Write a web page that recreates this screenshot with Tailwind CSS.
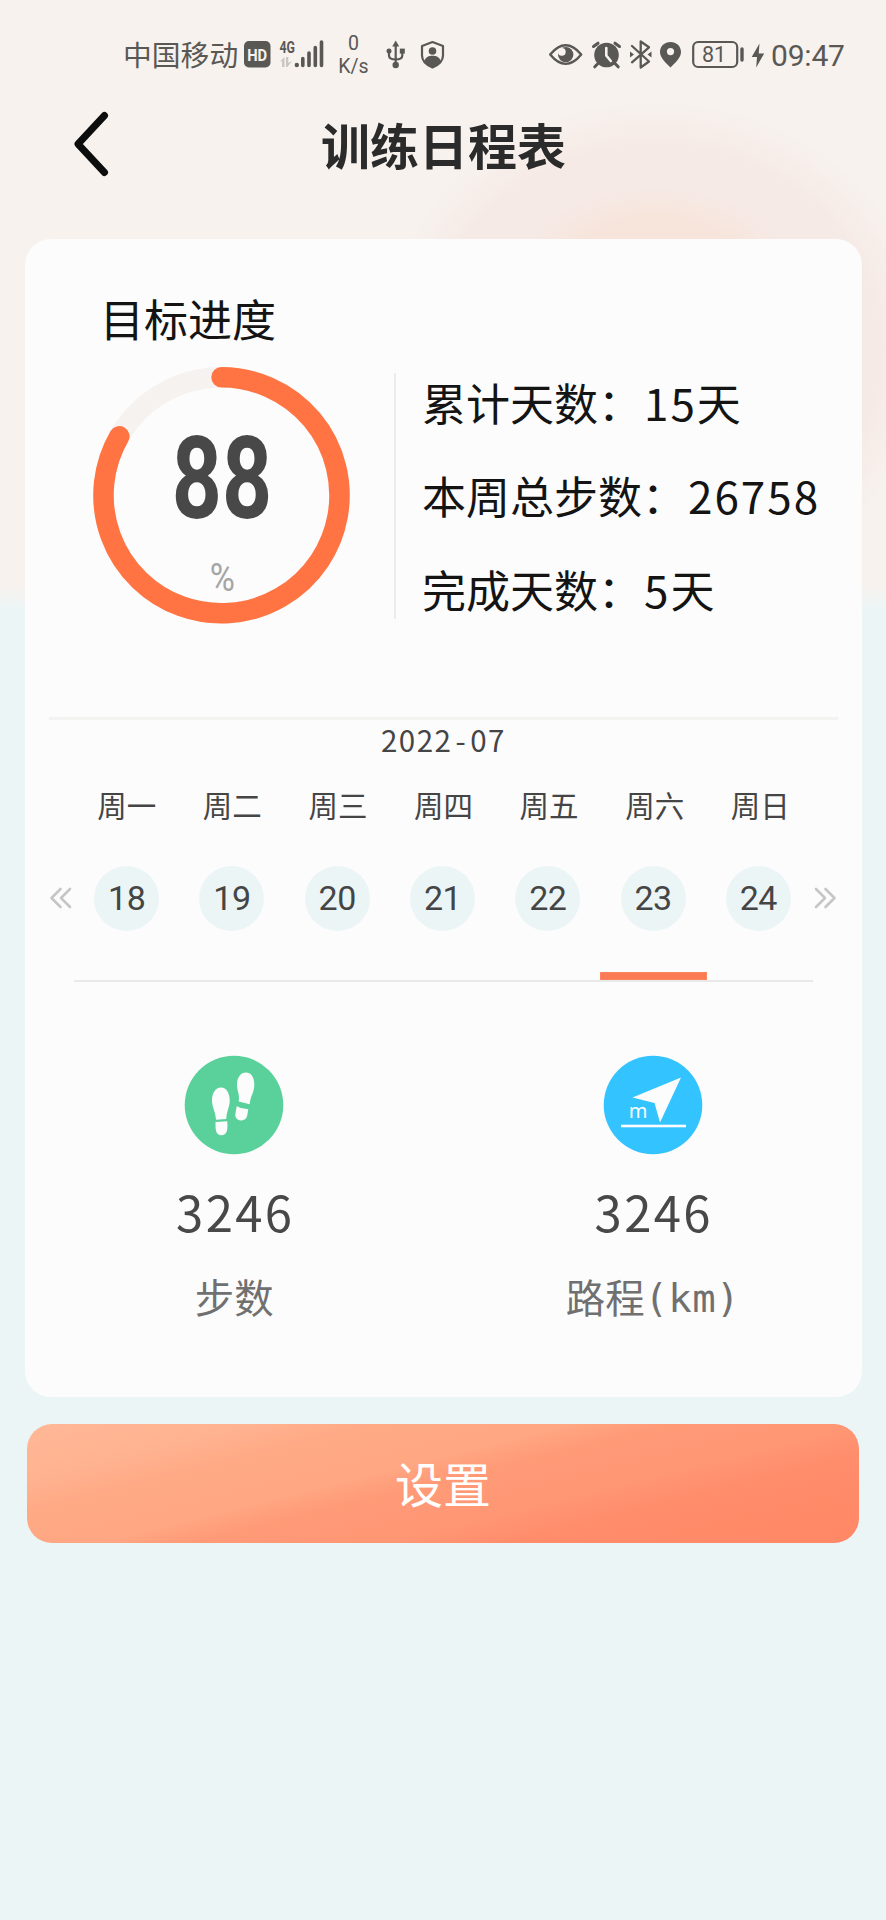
<!DOCTYPE html>
<html lang="zh-CN">
<head>
<meta charset="utf-8">
<title>训练日程表</title>
<script src="https://cdn.jsdelivr.net/npm/@tailwindcss/browser@4"></script>
</head>
<body class="w-[886px] h-[1920px] overflow-hidden flex flex-col font-['Noto_Sans_CJK_SC',sans-serif] bg-[#ecf5f6] bg-[radial-gradient(ellipse_135px_85px_at_655px_272px,#f7e5db_0%,#f7e5db_65%,transparent_100%),radial-gradient(ellipse_275px_250px_at_655px_350px,#f6eae6_0%,#f6eae6_82%,transparent_100%),linear-gradient(to_bottom,#f7f2ee_0px,#f7f2ee_585px,#ecf5f6_610px)]">

<!-- status bar -->
<header class="h-[90px] shrink-0 flex items-start pt-9 pl-[123px] text-[#595855]">
  <div class="w-[117px] h-10 text-[28.8px] leading-[36px] whitespace-nowrap">中国移动</div>
  <svg class="w-[90px] h-10" viewBox="240 36 90 40" fill="#595855">
    <rect x="244" y="41" width="26.500" height="26.500" rx="5"/>
    <text x="257.200" y="60.500" font-family="Roboto" font-size="16" font-weight="700" fill="#f7f2ee" text-anchor="middle" textLength="20" lengthAdjust="spacingAndGlyphs">HD</text>
    <text x="279.500" y="52.500" font-family="Roboto" font-size="16.500" font-weight="700" textLength="15.500" lengthAdjust="spacingAndGlyphs">4G</text>
    <path d="M280 61.500l4.500-4.500v10h-2.400v-6zM286 57h2.300v6l4-2-5 6H286z" fill="#c9c6c2"/>
    <circle cx="296.800" cy="65" r="2.200"/>
    <path d="M302.800 58.500v7M309 53v12.500M315.300 47.500v18M321.500 42v23.500" stroke="#595855" stroke-width="3.600" stroke-linecap="round"/>
  </svg>
  <div class="w-[47px] h-10 flex flex-col items-center font-[Roboto] text-[19.5px] leading-[23px]"><span class="-mt-1 h-[23px]">0</span><span>K/s</span></div>
  <svg class="w-[70px] h-10 ml-[5px]" viewBox="382 36 70 40" fill="none" stroke="#595855" stroke-width="2.200">
    <path d="M395.700 45v18M389 52v3.500q0 4 6.700 4M402.300 52v3.500q0 4-6.600 4"/>
    <g fill="#595855" stroke="none"><path d="M395.700 40.500l3.500 6h-7z"/><circle cx="389" cy="51" r="2.500"/><rect x="399.800" y="48.600" width="5" height="5"/><circle cx="395.700" cy="65" r="3.200"/></g>
    <path d="M432.500 42l10.500 4v9.500c0 6-4.500 9.500-10.500 12-6-2.500-10.500-6-10.500-12V46z" stroke-linejoin="round"/>
    <g fill="#595855" stroke="none"><circle cx="432.500" cy="51" r="3.800"/><path d="M424.200 61.500c1-4.500 4.500-5.700 8.300-5.700s7.300 1.200 8.300 5.700c-2 3-5 4.700-8.300 6-3.300-1.300-6.300-3-8.300-6z"/></g>
  </svg>
  <svg class="w-[224px] h-10 ml-[93px]" viewBox="545 36 224 40" fill="#595855">
    <path d="M550.200 54.600q7.500-9.300 15.500-9.300t15.500 9.300q-7.500 9.300-15.500 9.300t-15.500-9.300z" fill="none" stroke="#595855" stroke-width="2.400" stroke-linejoin="round"/>
    <circle cx="565.700" cy="54.600" r="7.700"/><circle cx="561.800" cy="51.800" r="3.900" fill="#f7f2ee"/>
    <circle cx="606.500" cy="55" r="12.300"/>
    <path d="M593.500 46.500l4.500-3.300M619.500 46.500l-4.500-3.300M597.500 64l-2.700 2.800M615.500 64l2.700 2.800" stroke="#595855" stroke-width="3" stroke-linecap="round"/>
    <path d="M606.300 48v7.500l4.500 5.500" stroke="#f7f2ee" stroke-width="2.600" fill="none" stroke-linecap="round"/>
    <path d="M632 46l17 15.500-8.300 6V41.500l8.300 5.800-17 15" fill="none" stroke="#595855" stroke-width="2.300" stroke-linejoin="round" stroke-linecap="round"/>
    <path d="M630 51.500l4 3-4 3zM651.500 51.500l-4 3 4 3z"/>
    <path fill-rule="evenodd" d="M670.500 42c6 0 10.500 4.300 10.500 10 0 6-6 11-10.500 15.500C666 63 660 58 660 52c0-5.700 4.500-10 10.500-10zm0 6a3.600 3.600 0 1 0 0 7.200 3.600 3.600 0 0 0 0-7.200z"/>
    <rect x="693.200" y="42" width="44" height="25" rx="5" fill="none" stroke="#595855" stroke-width="2.200"/>
    <path d="M742 49v11" stroke="#595855" stroke-width="3.400" stroke-linecap="round"/>
    <text x="714" y="62.300" font-family="Roboto" font-size="21.500" text-anchor="middle">81</text>
    <path d="M759.500 43.500l-7.800 13.500h5.300l-.8 10.500 8-14h-5.500z"/>
  </svg>
  <div class="h-10 font-[Roboto] text-[30px] leading-[40px] tracking-[-0.2px] ml-[2px]">09:47</div>
</header>

<!-- title bar -->
<nav class="h-[149px] shrink-0 flex items-start pl-[72px]">
  <svg class="w-10 h-[72px] mt-[18px]" viewBox="72 108 40 72" fill="none" stroke="#0d0d0d" stroke-width="7" stroke-linecap="round" stroke-linejoin="round"><path d="M104.500 115.500L78 144l26.500 28.500"/></svg>
  <h1 class="ml-[209px] mt-[19px] text-[49px] leading-[70px] font-bold text-[#2b2b2b] whitespace-nowrap">训练日程表</h1>
</nav>

<main class="ml-[25px] mr-6 h-[1158px] shrink-0 rounded-[26px] bg-[#fcfcfc] flex flex-col">
  <h2 class="h-[106px] shrink-0 pt-[49px] pl-[75px] text-[44px] leading-[60px] text-[#141414]">目标进度</h2>

  <section class="h-[372px] shrink-0 flex pl-[67px] pt-5">
    <div class="grid w-[260px] h-[260px]">
      <svg class="col-start-1 row-start-1 w-[260px] h-[260px]" viewBox="0 0 260 260" fill="none" stroke-width="20.500" stroke-linecap="round">
        <circle cx="129.500" cy="130.300" r="118" stroke="#f6f2ef"/>
        <path d="M129.500 12.300A118 118 0 1 1 27.300 71.300" stroke="#ff7442"/>
      </svg>
      <div class="col-start-1 row-start-1 flex flex-col items-center font-[Roboto] pt-[60px]">
        <div class="h-[108px] text-[115px] leading-[108px] font-bold text-[#484848] scale-x-[0.76]">88</div>
        <div class="h-10 mt-[25px] text-[39px] leading-10 text-[#a5a5a5] scale-x-[0.88]">%</div>
      </div>
    </div>
    <div class="w-[2px] h-[246px] mt-2 ml-[42px] bg-[#ececec]"></div>
    <div class="ml-[26px] mt-[-9px] flex flex-col text-[44px] text-[#141414] whitespace-nowrap">
      <div class="h-[93px] leading-[93px]">累计天数：<span class="tracking-[2px] pl-[2px]">15</span>天</div>
      <div class="h-[94px] leading-[93px]">本周总步数：<span class="tracking-[2px] pl-[2px]">26758</span></div>
      <div class="h-[93px] leading-[93px]">完成天数：<span class="tracking-[2px] pl-[2px]">5</span>天</div>
    </div>
  </section>

  <section class="shrink-0 h-[267px] mx-6 border-t-3 border-[#f3f3f2] flex flex-col text-[#454545]">
    <div class="h-[42px] text-center text-[29.5px] leading-[38px] tracking-[1.5px]">2022<span class="px-[3px]">-</span>07</div>
    <div class="h-[88px] mx-[25px] grid grid-cols-7 text-center text-[29.5px] leading-[84px]">
      <div>周一</div><div>周二</div><div>周三</div><div>周四</div><div>周五</div><div>周六</div><div>周日</div>
    </div>
    <div class="h-24 flex items-center font-[Roboto] text-[34px]">
      <svg class="w-[25px] h-6" viewBox="1 0 25 24" fill="none" stroke="#c6c6c6" stroke-width="2.600" stroke-linecap="round" stroke-linejoin="round"><path d="M12.500 3L3.500 12l9 9M22 3l-9 9 9 9"/></svg>
      <div class="flex-1 grid grid-cols-7 justify-items-center leading-[65px] text-center tracking-[-0.5px] mr-[2px]">
        <div class="size-[65px] rounded-full bg-[#ecf5f6]">18</div><div class="size-[65px] rounded-full bg-[#ecf5f6]">19</div><div class="size-[65px] rounded-full bg-[#ecf5f6]">20</div><div class="size-[65px] rounded-full bg-[#ecf5f6]">21</div><div class="size-[65px] rounded-full bg-[#ecf5f6]">22</div><div class="size-[65px] rounded-full bg-[#ecf5f6]">23</div><div class="size-[65px] rounded-full bg-[#ecf5f6]">24</div>
      </div>
      <svg class="w-[25px] h-6" viewBox="0 0 25 24" fill="none" stroke="#c6c6c6" stroke-width="2.600" stroke-linecap="round" stroke-linejoin="round"><path d="M3 3l9 9-9 9M12.500 3l9 9-9 9"/></svg>
    </div>
    <div class="mx-[25px] h-[36px] border-b-2 border-[#e9e9e9] flex items-end">
      <div class="ml-[526px] w-[107px] h-2 bg-[#fa7b54] border border-[#f9865f]"></div>
    </div>
  </section>

  <section class="grid grid-cols-2 pt-[71px] text-center">
    <div class="flex flex-col items-center">
      <svg class="size-[100px]" viewBox="-50 -50 100 100" fill="#fcfcfc">
        <circle r="49.300" fill="#5ad19b"/>
        <path d="M-13-17.500c5.500 0 9 6 8.700 14C-4.600 3-7.500 6-7.700 14l-10.300.8C-18.500 7-21.500 3-22-3.500c-.3-8 3.500-14 9-14z"/>
        <path d="M-18.500 17l11.700-.8c.3 3.500.5 6.800-.3 9.800-1.200 5-8.800 6-10.600.8-.9-3-.8-6.300-.8-9.800z"/>
        <path d="M12.500-32.500c5.800.3 8.500 7 7.700 14.500C19.500-11.500 16.500-9 15.700-.8L4.700-3.500C6-11 2.800-14.500 3-21c.3-7 4-11.800 9.500-11.500z"/>
        <path d="M2.800 1.200Q8.500 4.500 14.300 4c-.7 4-.7 7-2.300 9.300-2.500 3.500-9.300 2.500-10.500-1.500C1 9 2 5 2.800 1.200z"/>
      </svg>
      <div class="mt-[21px] text-[49px] leading-[70px] tracking-[2.4px] text-[#484848] pl-[2px]">3246</div>
      <div class="mt-[20px] text-[39.4px] leading-[60px] text-[#707070]">步数</div>
    </div>
    <div class="flex flex-col items-center">
      <svg class="size-[100px]" viewBox="-50 -50 100 100" fill="#fcfcfc">
        <circle r="49.300" fill="#33c3ff"/>
        <path d="M28-27.500L7 17.500 1.500-2-20.500-7.500z"/>
        <text x="-15" y="12.500" font-family="Noto Sans" font-size="20" text-anchor="middle">m</text>
        <rect x="-32" y="19.700" width="65" height="2.600"/>
      </svg>
      <div class="mt-[21px] text-[49px] leading-[70px] tracking-[2.4px] text-[#484848] pl-[2px]">3246</div>
      <div class="mt-[20px] h-[60px] text-[39.4px] leading-[60px] text-[#707070] flex">路程<span class="font-['DejaVu_Sans_Mono'] text-[39px] tracking-[0.3px] pt-[3px]">(km)</span></div>
    </div>
  </section>
</main>

<button class="mx-[27px] mt-[27px] h-[119px] shrink-0 rounded-[25px] text-white text-[48px] leading-[116px] pb-[3px] bg-[linear-gradient(166deg,#ffb896_0%,#ffb290_18%,#ffa985_27%,#ffa682_42%,#ff9a77_49%,#ff9674_64%,#ff8c6b_74%,#ff8866_100%)]">设置</button>
</body>
</html>
